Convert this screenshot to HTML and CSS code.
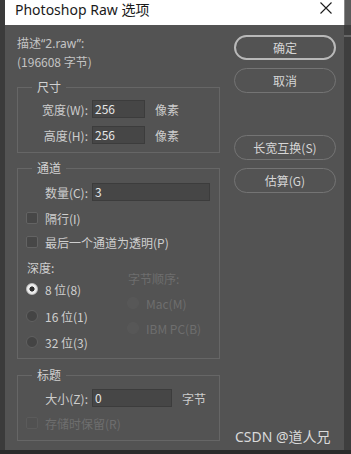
FILE: index.html
```html
<!DOCTYPE html>
<html>
<head>
<meta charset="utf-8">
<link rel="stylesheet" href="styles.css">
</head>
<body>
<div class="screen">
  <div class="strip-left"></div>
  <div class="dialog">
    <div class="titlebar">
      <span class="title">Photoshop Raw 选项</span>
      <svg class="close" width="12" height="12" viewBox="0 0 12 12"><path d="M0.5 0.5 L11.5 11.5 M11.5 0.5 L0.5 11.5" stroke="#1c1c1c" stroke-width="1.1" fill="none"/></svg>
    </div>
    <div class="body">
      <div class="main">
        <div class="desc">描述<span class="latin">“2.raw”:</span></div>
        <div class="desc">(196608 字节)</div>

        <fieldset class="group g-size">
          <legend>尺寸</legend>
          <div class="field"><span class="label">宽度(W):</span><span class="input in-small">256</span><span class="unit">像素</span></div>
          <div class="field gap8"><span class="label">高度(H):</span><span class="input in-small">256</span><span class="unit">像素</span></div>
        </fieldset>

        <fieldset class="group g-channel">
          <legend>通道</legend>
          <div class="field"><span class="label">数量(C):</span><span class="input in-wide">3</span></div>
          <div class="check mt8"><span class="box"></span><span>隔行(I)</span></div>
          <div class="check mt6"><span class="box"></span><span>最后一个通道为透明(P)</span></div>
          <div class="depth">
            <div class="col-left">
              <div class="row">深度:</div>
              <div class="check mt3"><span class="radio on"></span><span>8 位(8)</span></div>
              <div class="check mt9"><span class="radio"></span><span>16 位(1)</span></div>
              <div class="check mt8"><span class="radio"></span><span>32 位(3)</span></div>
            </div>
            <div class="col-right disabled">
              <div class="row mt11">字节顺序:</div>
              <div class="check mt6"><span class="radio off"></span><span>Mac(M)</span></div>
              <div class="check mt7"><span class="radio off"></span><span>IBM PC(B)</span></div>
            </div>
          </div>
        </fieldset>

        <fieldset class="group g-header">
          <legend>标题</legend>
          <div class="field"><span class="label">大小(Z):</span><span class="input in-mid">0</span><span class="unit">字节</span></div>
          <div class="check mt7 disabled"><span class="box off"></span><span>存储时保留(R)</span></div>
        </fieldset>
      </div>

      <div class="buttons">
        <div class="btn default">确定</div>
        <div class="btn mt8">取消</div>
        <div class="btn mt42">长宽互换(S)</div>
        <div class="btn mt8">估算(G)</div>
      </div>

      <div class="watermark">CSDN @道人兄</div>
    </div>
  </div>
  <div class="strip-right"><div class="sr-top"></div><div class="sr-line"></div></div>
</div>
<div class="strip-bottom"></div>
</body>
</html>
```

FILE: styles.css
```css
html, body {
  margin: 0;
  padding: 0;
  background: #2c2c2c;
}
body {
  width: 351px;
  height: 454px;
  overflow: hidden;
  font-family: "Noto Sans CJK SC", "Noto Sans", sans-serif;
  font-size: 12px;
  color: #cfcfcf;
}
.screen {
  display: flex;
  height: 450px;
}
.strip-left {
  width: 5px;
  background: #3b3b3b;
}
.strip-right {
  width: 7px;
  background: #3e3e3e;
  display: flex;
  flex-direction: column;
}
.sr-top {
  height: 25px;
  background: #5a5a5a;
  border-left: 1px solid #8a8a8a;
}
.sr-line {
  height: 2px;
  margin-top: 10px;
  background: #666;
}
.strip-bottom {
  height: 4px;
  background: #2a2a2a;
}
.dialog {
  width: 339px;
  display: flex;
  flex-direction: column;
}
.titlebar {
  height: 25px;
  background: #ffffff;
  display: flex;
  align-items: flex-start;
  padding-left: 10px;
}
.title {
  font-family: "Noto Sans", "Noto Sans CJK SC", sans-serif;
  font-size: 14px;
  line-height: 20px;
  color: #1a1a1a;
}
.close {
  margin-left: auto;
  margin-right: 12px;
  margin-top: 2px;
}
.body {
  position: relative;
  height: 425px;
  background: #535353;
  display: flex;
  padding: 9px 0 0 12px;
  box-sizing: border-box;
}
.main {
  width: 203px;
}
.desc {
  line-height: 18px;
  color: #c4c4c4;
}
.latin {
  font-family: "Noto Sans", sans-serif;
}
.group {
  margin: 0;
  border: 1px solid #666666;
  padding: 4px 8px 8px 8px;
  min-width: 0;
}
.group legend {
  padding: 0 5px;
  margin-left: 6px;
  line-height: 18px;
  color: #d2d2d2;
}
.g-size { margin-top: 7px; }
.g-channel { margin-top: 6px; padding-top: 6px; padding-bottom: 7px; }
.g-header { margin-top: 7px; padding-top: 5px; padding-bottom: 8px; }

.field {
  display: flex;
  align-items: center;
  height: 18px;
}
.gap8 { margin-top: 8px; }
.label {
  width: 62px;
  text-align: right;
  margin-right: 4px;
  color: #cdcdcd;
}
.input {
  height: 18px;
  box-sizing: border-box;
  background: #464646;
  border: 1px solid #3c3c3c;
  padding-left: 2px;
  line-height: 16px;
  color: #e6e6e6;
}
.in-small { width: 53px; }
.in-wide { width: 118px; }
.in-mid { width: 80px; }
.unit {
  margin-left: 10px;
  color: #cdcdcd;
}
.check {
  display: flex;
  align-items: center;
  height: 18px;
}
.row {
  height: 18px;
  line-height: 18px;
  padding-left: 1px;
}
.box {
  width: 12px;
  height: 12px;
  box-sizing: border-box;
  border: 1px solid #636363;
  border-radius: 2px;
  background: #474747;
  margin-right: 7px;
}
.box.off {
  border-color: #5b5b5b;
  background: #515151;
}
.radio {
  width: 12px;
  height: 12px;
  box-sizing: border-box;
  border-radius: 50%;
  border: 1px solid #606060;
  background: #444444;
  margin-right: 7px;
}
.radio.on {
  border: 1px solid #bdbdbd;
  background: radial-gradient(circle, #2e2e2e 0 2.3px, #ececec 2.8px);
}
.radio.off {
  border-color: #585858;
  background: #575757;
}
.depth {
  display: flex;
  margin-top: 8px;
}
.col-left { width: 101px; }
.disabled { color: #6e6e6e; }
.mt3 { margin-top: 3px; }
.mt6 { margin-top: 6px; }
.mt7 { margin-top: 7px; }
.mt8 { margin-top: 8px; }
.mt9 { margin-top: 9px; }
.mt11 { margin-top: 11px; }
.mt42 { margin-top: 42px; }

.buttons {
  margin-left: 14px;
  margin-top: 1px;
  width: 102px;
  display: flex;
  flex-direction: column;
}
.btn {
  height: 25px;
  box-sizing: border-box;
  border: 1px solid #747474;
  border-radius: 13px;
  display: flex;
  align-items: center;
  justify-content: center;
  color: #d6d6d6;
}
.btn.default {
  border: 2px solid #b9b9b9;
}
.watermark {
  position: absolute;
  left: 230px;
  top: 403px;
  font-family: "Noto Sans", "Noto Sans CJK SC", sans-serif;
  font-size: 14px;
  line-height: 18px;
  color: #dadada;
}
```
